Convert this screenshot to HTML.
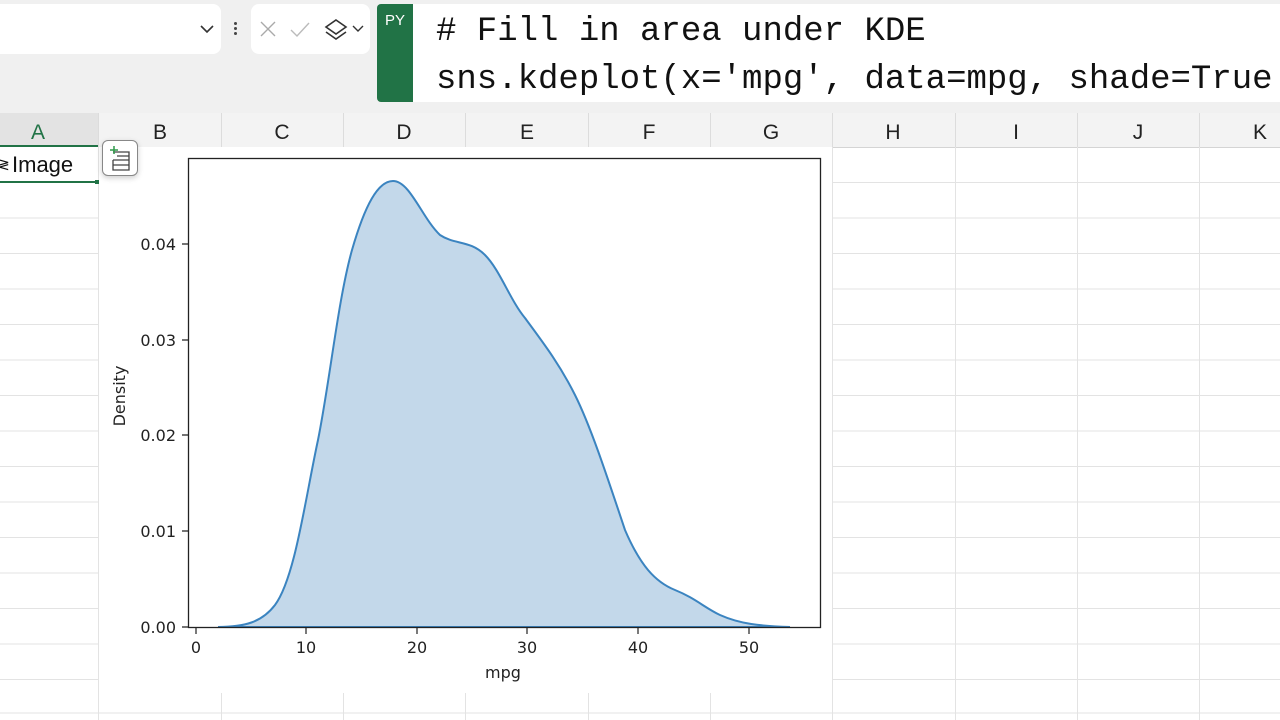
<!DOCTYPE html>
<html><head><style>
body{margin:0;width:1280px;height:720px;overflow:hidden;background:#fff;font-family:"Liberation Sans",sans-serif;position:relative}
.abs{position:absolute}
</style></head><body>
<div class="abs" style="left:0;top:0;width:1280px;height:113px;background:#f0f0f0"></div>
<div class="abs" style="left:0;top:4px;width:221px;height:50px;background:#fff;border-radius:0 8px 8px 0"></div>
<svg class="abs" style="left:198px;top:22px" width="20" height="14"><path d="M3 4 L9 10 L15 4" stroke="#333" stroke-width="1.6" fill="none"/></svg>
<div class="abs" style="left:234px;top:22px;width:3px;height:3px;background:#444;border-radius:2px;box-shadow:0 5px 0 #444,0 10px 0 #444"></div>
<div class="abs" style="left:251px;top:4px;width:119px;height:50px;background:#fff;border-radius:8px"></div>
<svg class="abs" style="left:251px;top:4px" width="119" height="50"><path d="M10 18 L24 32 M24 18 L10 32" stroke="#aaa" stroke-width="1.4"/><path d="M40 26 L46 32 L58 19" stroke="#bbb" stroke-width="1.4" fill="none"/><path d="M85 16 L95 23 L85 30 L75 23 Z M75 28 L85 35 L95 28" stroke="#333" stroke-width="1.6" fill="none"/><path d="M102 22 L107 27 L112 22" stroke="#333" stroke-width="1.4" fill="none"/></svg>
<div class="abs" style="left:377px;top:4px;width:36px;height:98px;background:#217346;border-radius:4px 0 0 4px;color:#fff;font-size:15px;text-align:center;padding-top:8px;box-sizing:border-box">PY</div>
<div class="abs" style="left:413px;top:4px;width:867px;height:98px;background:#fff"></div>
<div class="abs" style="left:436px;top:8px;font-family:'Liberation Mono',monospace;font-size:34px;line-height:48px;color:#111;white-space:pre"># Fill in area under KDE
sns.kdeplot(x='mpg', data=mpg, shade=True</div>
<div class="abs" style="left:0;top:113px;width:1280px;height:34px;background:#f3f3f3;border-bottom:1px solid #d4d4d4"></div>
<div class="abs" style="left:0;top:113px;width:98px;height:34px;background:#e3e3e3;border-bottom:2px solid #217346;box-sizing:border-box"></div>
<svg class="abs" style="left:0;top:113px" width="1280" height="35" font-family="Liberation Sans" font-size="21" text-anchor="middle">
<text x="38" y="26" fill="#217346">A</text>
<g fill="#222"><text x="160" y="26">B</text><text x="282" y="26">C</text><text x="404" y="26">D</text><text x="527" y="26">E</text><text x="649" y="26">F</text><text x="771" y="26">G</text><text x="893" y="26">H</text><text x="1016" y="26">I</text><text x="1138" y="26">J</text><text x="1260" y="26">K</text></g>
<g stroke="#dcdcdc"><path d="M98.5 0V34M221.5 0V34M343.5 0V34M465.5 0V34M588.5 0V34M710.5 0V34M832.5 0V34M955.5 0V34M1077.5 0V34M1199.5 0V34"/></g>
</svg>
<svg class="abs" style="left:0;top:147px" width="1280" height="573">
<g stroke="#e3e3e3">
<path d="M0 35.5H1280M0 71H1280M0 106.5H1280M0 142H1280M0 177.5H1280M0 213H1280M0 248.5H1280M0 284H1280M0 319.5H1280M0 355H1280M0 390.5H1280M0 426H1280M0 461.5H1280M0 497H1280M0 532.5H1280M0 566H1280"/>
<path d="M98.5 0V573M221.5 0V573M343.5 0V573M465.5 0V573M588.5 0V573M710.5 0V573M832.5 0V573M955.5 0V573M1077.5 0V573M1199.5 0V573"/>
</g>
<rect x="99" y="0" width="733" height="546" fill="#fff"/>
<rect x="0" y="0" width="98" height="36" fill="#fff"/>
<path d="M0 35H98" stroke="#217346" stroke-width="2"/><rect x="95" y="33" width="4" height="4" fill="#217346"/>
</svg>
<div class="abs" style="left:12px;top:152px;font-size:22px;color:#111">Image</div>
<div class="abs" style="left:-2px;top:156px;font-size:14px;color:#111">≷</div>
<div class="abs" style="left:102px;top:140px;width:34px;height:34px;background:#fff;border:1px solid #888;border-radius:6px;box-shadow:0 2px 6px rgba(0,0,0,.2)"></div>
<svg class="abs" style="left:102px;top:140px" width="36" height="36"><path d="M11 12H27V30H11V20M15 16H27M11 20H27M11 25H27" stroke="#444" stroke-width="1.3" fill="none"/><path d="M12 6V14M8 10H16" stroke="#2e9a4a" stroke-width="1.5"/></svg>
<svg class="abs" style="left:0;top:0" width="1280" height="720" font-family="DejaVu Sans" font-size="16" fill="#222">
<path d="M218 627 C245 627 262 622 275 605 C295 578 305 500 318 440 C330 380 338 300 352 250 C365 205 378 181 393 181 C410 181 422 218 440 235 C455 245 470 240 485 255 C500 270 510 300 525 318 C545 345 560 365 575 395 C590 425 605 470 625 530 C640 565 655 582 675 590 C695 598 705 608 720 615 C740 624 760 626 790 627 Z" fill="#c3d8ea" stroke="#3b84c0" stroke-width="2"/>
<rect x="188.5" y="158.5" width="632" height="469" fill="none" stroke="#222" stroke-width="1.3"/>
<g stroke="#222" stroke-width="1.2"><path d="M196 628v6M306 628v6M417 628v6M527 628v6M638 628v6M749 628v6M188 627h-6M188 531h-6M188 435h-6M188 340h-6M188 244h-6"/></g>
<g text-anchor="middle"><text x="196" y="653">0</text><text x="306" y="653">10</text><text x="417" y="653">20</text><text x="527" y="653">30</text><text x="638" y="653">40</text><text x="749" y="653">50</text><text x="503" y="678">mpg</text></g>
<g text-anchor="end"><text x="176" y="633">0.00</text><text x="176" y="537">0.01</text><text x="176" y="441">0.02</text><text x="176" y="346">0.03</text><text x="176" y="250">0.04</text></g>
<text transform="translate(125 396) rotate(-90)" text-anchor="middle">Density</text>
</svg>
</body></html>
